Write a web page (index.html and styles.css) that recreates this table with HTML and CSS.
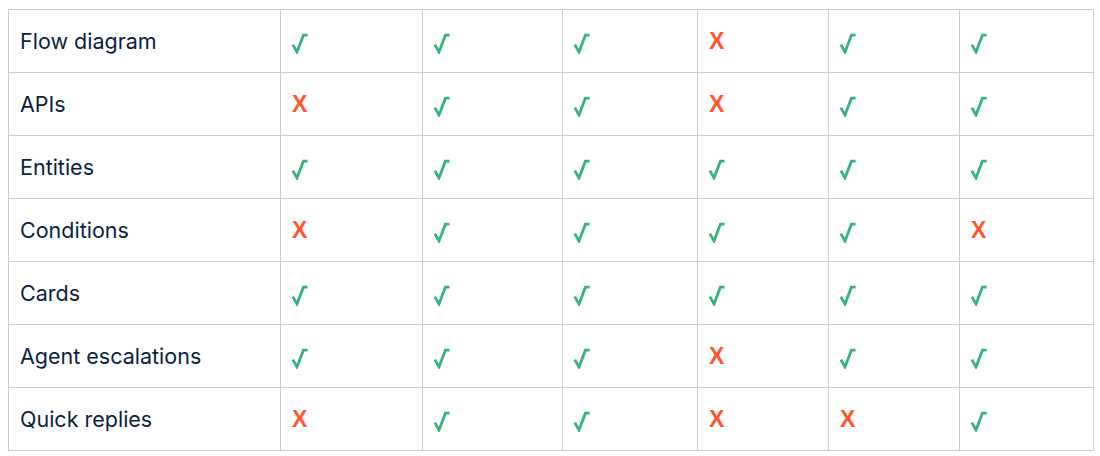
FILE: index.html
```html
<!DOCTYPE html>
<html lang="en">
<head>
<meta charset="utf-8">
<link rel="stylesheet" href="styles.css">
</head>
<body>
<svg width="0" height="0" class="defs" aria-hidden="true">
  <symbol id="chk" viewBox="0 0 18 21">
    <path d="M1.8 11.6 L6 19 L12.4 2.2 L16.6 2.2" fill="none" stroke="currentColor" stroke-width="2.8" stroke-linejoin="miter" stroke-miterlimit="6" stroke-linecap="butt"/>
  </symbol>
</svg>
<table class="matrix">
  <colgroup>
    <col class="c-label"><col class="c1"><col class="c2"><col class="c3"><col class="c4"><col class="c5"><col class="c6">
  </colgroup>
  <tbody>
    <tr><td class="label">Flow diagram</td><td><svg class="yes"><use href="#chk"/></svg></td><td><svg class="yes"><use href="#chk"/></svg></td><td><svg class="yes"><use href="#chk"/></svg></td><td><span class="no">X</span></td><td><svg class="yes"><use href="#chk"/></svg></td><td><svg class="yes"><use href="#chk"/></svg></td></tr>
    <tr><td class="label">APIs</td><td><span class="no">X</span></td><td><svg class="yes"><use href="#chk"/></svg></td><td><svg class="yes"><use href="#chk"/></svg></td><td><span class="no">X</span></td><td><svg class="yes"><use href="#chk"/></svg></td><td><svg class="yes"><use href="#chk"/></svg></td></tr>
    <tr><td class="label">Entities</td><td><svg class="yes"><use href="#chk"/></svg></td><td><svg class="yes"><use href="#chk"/></svg></td><td><svg class="yes"><use href="#chk"/></svg></td><td><svg class="yes"><use href="#chk"/></svg></td><td><svg class="yes"><use href="#chk"/></svg></td><td><svg class="yes"><use href="#chk"/></svg></td></tr>
    <tr><td class="label">Conditions</td><td><span class="no">X</span></td><td><svg class="yes"><use href="#chk"/></svg></td><td><svg class="yes"><use href="#chk"/></svg></td><td><svg class="yes"><use href="#chk"/></svg></td><td><svg class="yes"><use href="#chk"/></svg></td><td><span class="no">X</span></td></tr>
    <tr><td class="label">Cards</td><td><svg class="yes"><use href="#chk"/></svg></td><td><svg class="yes"><use href="#chk"/></svg></td><td><svg class="yes"><use href="#chk"/></svg></td><td><svg class="yes"><use href="#chk"/></svg></td><td><svg class="yes"><use href="#chk"/></svg></td><td><svg class="yes"><use href="#chk"/></svg></td></tr>
    <tr><td class="label">Agent escalations</td><td><svg class="yes"><use href="#chk"/></svg></td><td><svg class="yes"><use href="#chk"/></svg></td><td><svg class="yes"><use href="#chk"/></svg></td><td><span class="no">X</span></td><td><svg class="yes"><use href="#chk"/></svg></td><td><svg class="yes"><use href="#chk"/></svg></td></tr>
    <tr><td class="label">Quick replies</td><td><span class="no">X</span></td><td><svg class="yes"><use href="#chk"/></svg></td><td><svg class="yes"><use href="#chk"/></svg></td><td><span class="no">X</span></td><td><span class="no">X</span></td><td><svg class="yes"><use href="#chk"/></svg></td></tr>
  </tbody>
</table>
</body>
</html>
```
FILE: styles.css
```css
html, body {
  margin: 0;
  background: #ffffff;
}
body {
  padding: 9px 8px 0;
  font-family: Inter, "Noto Sans", "Liberation Sans", sans-serif;
  color: #091e42;
}
.defs {
  position: absolute;
  width: 0;
  height: 0;
  overflow: hidden;
}
.matrix {
  border-collapse: collapse;
  table-layout: fixed;
  width: 1085px;
}
.c-label { width: 272px; }
.c1 { width: 142px; }
.c2 { width: 140px; }
.c3 { width: 135px; }
.c4 { width: 131px; }
.c5 { width: 131px; }
.c6 { width: 134px; }
.matrix td {
  border: 1px solid #c7ccd6;
  height: 63px;
  padding: 0 11px 0 10px;
  box-sizing: border-box;
  vertical-align: middle;
  font-size: 21.5px;
  line-height: 24px;
}
.label {
  font-weight: 400;
}
.matrix td.label {
  padding-left: 11px;
}
.yes {
  display: block;
  width: 18px;
  height: 21px;
  color: #36b37e;
  transform: translateY(2px);
}
.no {
  display: inline-block;
  padding-left: 1px;
  color: #ff5630;
  font-family: "Liberation Sans", Arial, sans-serif;
  font-weight: 700;
  font-size: 23px;
  line-height: 24px;
}
```
